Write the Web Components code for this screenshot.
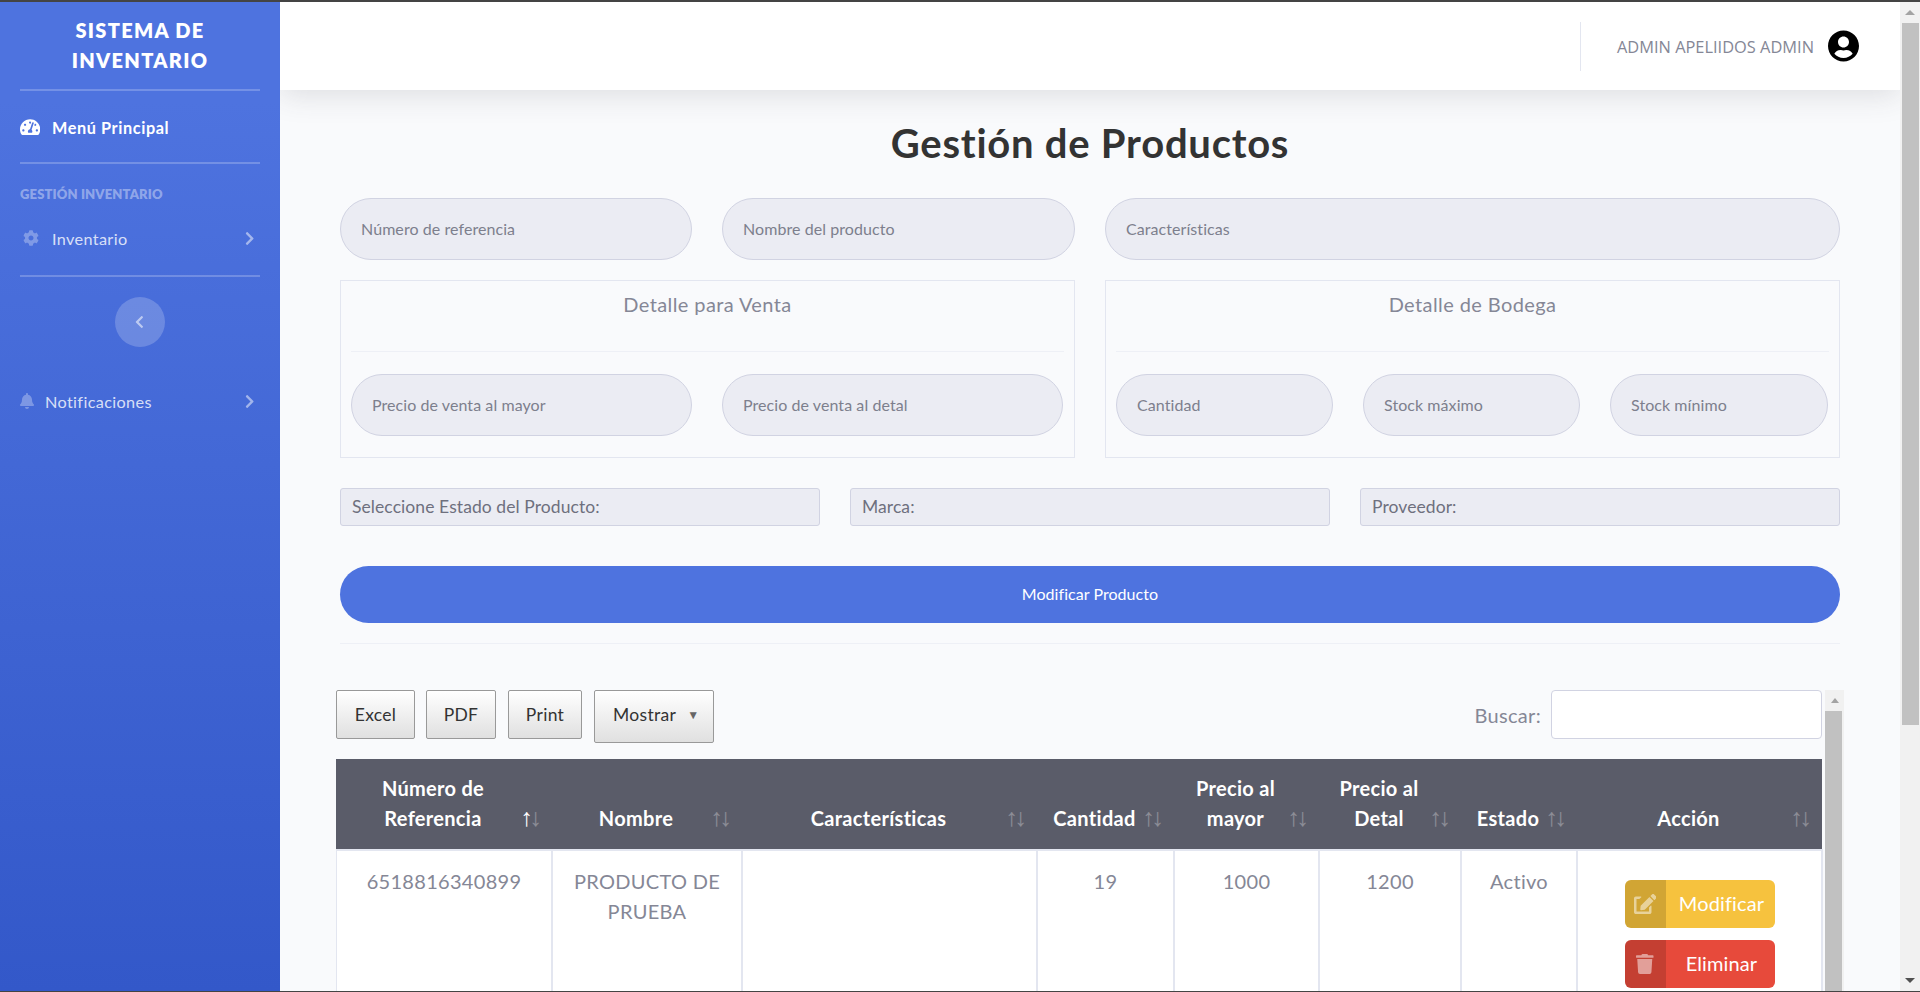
<!DOCTYPE html>
<html lang="es">
<head>
<meta charset="utf-8">
<title>Gestión de Productos</title>
<style>
    html, body {
        margin: 0;
        height: 992px;
        overflow: hidden;
    }

    body {
        box-sizing: border-box;
        display: flex;
        border-top: 2px solid #444;
        border-bottom: 1px solid #444;
        background: #f9fafc;
        font-family: Lato, "Noto Sans", sans-serif;
        font-size: 20px;
        color: #858796;
    }
</style>
</head>
<body>
<app-sidebar></app-sidebar>
<main-panel>
    <top-bar></top-bar>
    <product-form></product-form>
    <product-table></product-table>
</main-panel>
<page-scrollbar></page-scrollbar>

<script>
const ICONS = {
    gauge: ['0 0 576 512', 'M288 32C128.94 32 0 160.94 0 320c0 52.8 14.25 102.26 39.06 144.8 5.61 9.62 16.3 15.2 27.44 15.2h443c11.14 0 21.83-5.58 27.44-15.2C561.75 422.26 576 372.8 576 320c0-159.06-128.94-288-288-288zm0 64c14.71 0 26.58 10.13 30.32 23.65-1.11 2.26-2.64 4.23-3.45 6.67l-9.22 27.67c-5.13 3.49-10.97 6.01-17.64 6.01-17.67 0-32-14.33-32-32S270.33 96 288 96zM96 384c-17.67 0-32-14.33-32-32s14.33-32 32-32 32 14.33 32 32-14.33 32-32 32zm48-160c-17.67 0-32-14.33-32-32s14.33-32 32-32 32 14.33 32 32-14.33 32-32 32zm246.77-72.41l-61.33 184C343.13 347.33 352 364.54 352 384c0 11.72-3.38 22.55-8.88 32H232.88c-5.5-9.45-8.88-20.28-8.88-32 0-33.94 26.5-61.43 59.9-63.59l61.34-184.01c4.17-12.56 17.73-19.45 30.36-15.17 12.57 4.19 19.35 17.79 15.17 30.36zm14.66 57.2l15.52-46.55c3.47-1.29 7.13-2.23 11.05-2.23 17.67 0 32 14.33 32 32s-14.33 32-32 32c-11.38-.01-20.89-6.28-26.57-15.22zM480 384c-17.67 0-32-14.33-32-32s14.33-32 32-32 32 14.33 32 32-14.33 32-32 32z'],
    cog: ['0 0 512 512', 'M487.4 315.7l-42.6-24.6c4.3-23.2 4.3-47 0-70.2l42.6-24.6c4.9-2.8 7.1-8.6 5.5-14-11.1-35.6-30-67.8-54.7-94.6-3.8-4.1-10-5.1-14.8-2.3L380.8 110c-17.9-15.4-38.5-27.3-60.8-35.1V25.8c0-5.6-3.9-10.5-9.4-11.7-36.7-8.2-74.3-7.8-109.2 0-5.5 1.2-9.4 6.1-9.4 11.7V75c-22.2 7.9-42.8 19.8-60.8 35.1L88.7 85.5c-4.9-2.8-11-1.9-14.8 2.3-24.7 26.7-43.6 58.9-54.7 94.6-1.7 5.4.6 11.2 5.5 14L67.3 221c-4.3 23.2-4.3 47 0 70.2l-42.6 24.6c-4.9 2.8-7.1 8.6-5.5 14 11.1 35.6 30 67.8 54.7 94.6 3.8 4.1 10 5.1 14.8 2.3l42.6-24.6c17.9 15.4 38.5 27.3 60.8 35.1v49.2c0 5.6 3.9 10.5 9.4 11.7 36.7 8.2 74.3 7.8 109.2 0 5.5-1.2 9.4-6.1 9.4-11.7v-49.2c22.2-7.9 42.8-19.8 60.8-35.1l42.6 24.6c4.9 2.8 11 1.9 14.8-2.3 24.7-26.7 43.6-58.9 54.7-94.6 1.5-5.5-.7-11.3-5.6-14.1zM256 336c-44.1 0-80-35.9-80-80s35.9-80 80-80 80 35.9 80 80-35.9 80-80 80z'],
    bell: ['0 0 448 512', 'M224 512c35.32 0 63.97-28.65 63.97-64H160.03c0 35.35 28.65 64 63.97 64zm215.39-149.71c-19.32-20.76-55.47-51.99-55.47-154.29 0-77.7-54.48-139.9-127.94-155.16V32c0-17.67-14.32-32-31.98-32s-31.98 14.33-31.98 32v20.84C118.56 68.1 64.08 130.3 64.08 208c0 102.3-36.15 133.53-55.47 154.29-6 6.45-8.66 14.16-8.61 21.71.11 16.4 12.98 32 32.1 32h383.8c19.12 0 32-15.6 32.1-32 .05-7.55-2.61-15.27-8.61-21.71z'],
    right: ['0 0 320 512', 'M285.476 272.971L91.132 467.314c-9.373 9.373-24.569 9.373-33.941 0l-22.667-22.667c-9.357-9.357-9.375-24.522-.04-33.901L188.505 256 34.484 101.255c-9.335-9.379-9.317-24.544.04-33.901l22.667-22.667c9.373-9.373 24.569-9.373 33.941 0L285.475 239.03c9.373 9.372 9.373 24.568.001 33.941z'],
    left: ['0 0 320 512', 'M34.52 239.03L228.87 44.69c9.37-9.37 24.57-9.37 33.94 0l22.67 22.67c9.36 9.36 9.37 24.52.04 33.9L131.49 256l154.02 154.75c9.34 9.38 9.32 24.54-.04 33.9l-22.67 22.67c-9.37 9.37-24.57 9.37-33.94 0L34.52 272.97c-9.37-9.37-9.37-24.57 0-33.94z'],
    user: ['0 0 496 512', 'M248 8C111 8 0 119 0 256s111 248 248 248 248-111 248-248S385 8 248 8zm0 96c48.6 0 88 39.4 88 88s-39.4 88-88 88-88-39.4-88-88 39.4-88 88-88zm0 344c-58.7 0-111.3-26.6-146.5-68.2 18.8-35.4 55.6-59.8 98.5-59.8 2.4 0 4.8.4 7.1 1.1 13 4.2 26.6 6.9 40.9 6.9 14.3 0 28-2.7 40.9-6.9 2.3-.7 4.7-1.1 7.1-1.1 42.9 0 79.7 24.4 98.5 59.8C359.3 421.4 306.7 448 248 448z'],
    edit: ['0 0 576 512', 'M402.6 83.2l90.2 90.2c3.8 3.8 3.8 10 0 13.8L274.4 405.6l-92.8 10.3c-12.4 1.4-22.9-9.1-21.5-21.5l10.3-92.8L388.8 83.2c3.8-3.8 10-3.8 13.8 0zm162-22.9l-48.8-48.8c-15.2-15.2-39.9-15.2-55.2 0l-35.4 35.4c-3.8 3.8-3.8 10 0 13.8l90.2 90.2c3.8 3.8 10 3.8 13.8 0l35.4-35.4c15.2-15.3 15.2-40 0-55.2zM384 346.2V448H64V128h73.2c3.2 0 6.2-1.3 8.5-3.5l40-40c7.6-7.6 2.2-20.5-8.5-20.5H48C21.5 64 0 85.5 0 112v352c0 26.5 21.5 48 48 48h352c26.5 0 48-21.5 48-48V306.2c0-10.7-12.9-16-20.5-8.5l-40 40c-2.2 2.3-3.5 5.3-3.5 8.5z'],
    trash: ['0 0 448 512', 'M432 32H312l-9.4-18.7A24 24 0 0 0 281.1 0H166.8a23.72 23.72 0 0 0-21.4 13.3L136 32H16A16 16 0 0 0 0 48v32a16 16 0 0 0 16 16h416a16 16 0 0 0 16-16V48a16 16 0 0 0-16-16zM53.2 467a48 48 0 0 0 47.9 45h245.8a48 48 0 0 0 47.9-45L416 128H32z']
};

function icon(name, size) {
    const [box, d] = ICONS[name];
    return `<svg viewBox="${box}" height="${size}" fill="currentColor" style="display:block"><path d="${d}"/></svg>`;
}

class SideItem extends HTMLElement {
    constructor() {
        super();
        this.attachShadow({ mode: 'open' });
    }

    connectedCallback() {
        const chevron = this.hasAttribute('chevron') ? `<span class="chev">${icon('right', 15)}</span>` : '';
        this.shadowRoot.innerHTML = `
            <style>
                :host {
                    display: flex;
                    align-items: center;
                    height: 24px;
                    padding: 0 26px 0 20px;
                    color: rgba(255, 255, 255, 0.8);
                    font-size: 16.25px;
                    letter-spacing: 0.35px;
                }

                :host([active]) {
                    color: #fff;
                    font-weight: 700;
                    letter-spacing: 0.6px;
                }

                .ic {
                    width: var(--ic-width, 32px);
                    color: rgba(255, 255, 255, 0.3);
                    display: flex;
                    padding-left: var(--ic-pad, 3px);
                    box-sizing: border-box;
                }

                :host([active]) .ic {
                    color: #fff;
                }

                .chev {
                    margin-left: auto;
                    color: rgba(255, 255, 255, 0.5);
                }
            </style>
            <span class="ic">${icon(this.getAttribute('icon'), this.getAttribute('icon-size') || 16)}</span>
            <slot></slot>
            ${chevron}
        `;
    }
}

class AppSidebar extends HTMLElement {
    constructor() {
        super();
        this.attachShadow({ mode: 'open' });
    }

    connectedCallback() {
        this.shadowRoot.innerHTML = `
            <style>
                :host {
                    display: block;
                    flex: 0 0 280px;
                    background: linear-gradient(180deg, #4e73df 10%, #3358c9 100%);
                    font-weight: 400;
                }

                .brand {
                    height: 87px;
                    padding: 13px 20px 0;
                    box-sizing: border-box;
                    text-align: center;
                    color: #fff;
                    font-size: 20px;
                    font-weight: 800;
                    line-height: 30px;
                    letter-spacing: 1.3px;
                }

                hr {
                    margin: 0 20px;
                    border: 0;
                    border-top: 2px solid rgba(255, 255, 255, 0.22);
                }

                .heading {
                    margin: 22px 20px 0;
                    height: 16px;
                    font-size: 13px;
                    font-weight: 800;
                    line-height: 16px;
                    letter-spacing: 0.15px;
                    color: rgba(255, 255, 255, 0.4);
                }

                .toggle {
                    width: 50px;
                    height: 50px;
                    margin: 20px auto 0;
                    border-radius: 50%;
                    background: rgba(255, 255, 255, 0.2);
                    color: rgba(255, 255, 255, 0.55);
                    display: flex;
                    align-items: center;
                    justify-content: center;
                    padding-right: 2px;
                    box-sizing: border-box;
                }

                .m1 { margin-top: 24px; }
                .m2 { margin-top: 24px; }
                .m3 { margin-top: 23px; }
                .m4 { margin-top: 25px; }
                .m5 { margin-top: 42px; }
            </style>
            <div class="brand">SISTEMA DE INVENTARIO</div>
            <hr>
            <side-item class="m1" active icon="gauge" icon-size="18" style="--ic-pad:0">Menú Principal</side-item>
            <hr class="m3">
            <div class="heading">GESTIÓN INVENTARIO</div>
            <side-item class="m2" icon="cog" chevron>Inventario</side-item>
            <hr class="m4">
            <div class="toggle">${icon('left', 14)}</div>
            <side-item class="m5" icon="bell" chevron style="--ic-width:25px;--ic-pad:0">Notificaciones</side-item>
        `;
    }
}

class MainPanel extends HTMLElement {
    constructor() {
        super();
        this.attachShadow({ mode: 'open' });
    }

    connectedCallback() {
        this.shadowRoot.innerHTML = `
            <style>
                :host {
                    display: block;
                    flex: 1;
                    min-width: 0;
                    overflow: hidden;
                }
            </style>
            <slot></slot>
        `;
    }
}

class TopBar extends HTMLElement {
    constructor() {
        super();
        this.attachShadow({ mode: 'open' });
    }

    connectedCallback() {
        this.shadowRoot.innerHTML = `
            <style>
                :host {
                    display: flex;
                    align-items: center;
                    justify-content: flex-end;
                    height: 88px;
                    padding-right: 41px;
                    background: #fff;
                    box-shadow: 0 5px 30px rgba(58, 59, 69, 0.15);
                    position: relative;
                }

                .sep {
                    width: 1px;
                    height: 49px;
                    background: #e3e6f0;
                    margin-right: 36px;
                }

                .name {
                    font-family: "Open Sans", sans-serif;
                    font-size: 16.4px;
                    color: #858796;
                    margin-right: 14px;
                    white-space: nowrap;
                }

                .avatar {
                    color: #000;
                }
            </style>
            <div class="sep"></div>
            <span class="name">ADMIN APELIIDOS ADMIN</span>
            <span class="avatar">${icon('user', 32)}</span>
        `;
    }
}

class PillField extends HTMLElement {
    constructor() {
        super();
        this.attachShadow({ mode: 'open' });
    }

    connectedCallback() {
        this.shadowRoot.innerHTML = `
            <style>
                :host {
                    display: flex;
                    align-items: center;
                    height: 62px;
                    box-sizing: border-box;
                    padding: 0 20px 2px;
                    background: #ebecf3;
                    border: 1px solid #d1d3e2;
                    border-radius: 31px;
                    font-size: 16px;
                    letter-spacing: 0.07px;
                    color: #7d7f8d;
                    white-space: nowrap;
                }
            </style>
            <slot></slot>
        `;
    }
}

class SelectField extends HTMLElement {
    constructor() {
        super();
        this.attachShadow({ mode: 'open' });
    }

    connectedCallback() {
        this.shadowRoot.innerHTML = `
            <style>
                :host {
                    display: flex;
                    align-items: center;
                    height: 38px;
                    box-sizing: border-box;
                    padding: 0 11px 2px;
                    background: #ebecf3;
                    border: 1px solid #d1d3e2;
                    border-radius: 3px;
                    font-size: 17.5px;
                    letter-spacing: 0.08px;
                    color: #6e707e;
                    white-space: nowrap;
                }
            </style>
            <slot></slot>
        `;
    }
}

class DetailBox extends HTMLElement {
    constructor() {
        super();
        this.attachShadow({ mode: 'open' });
    }

    connectedCallback() {
        this.shadowRoot.innerHTML = `
            <style>
                :host {
                    display: block;
                    height: 178px;
                    box-sizing: border-box;
                    padding: 0 10px;
                    border: 1px solid #e3e6f0;
                }

                .title {
                    height: 71px;
                    padding-top: 8px;
                    box-sizing: border-box;
                    text-align: center;
                    font-size: 20px;
                    line-height: 30px;
                    letter-spacing: 0.4px;
                    border-bottom: 1px solid #eef0f6;
                }

                .fields {
                    display: grid;
                    grid-template-columns: var(--cols);
                    column-gap: var(--gap);
                    margin-top: 22px;
                }
            </style>
            <div class="title">${this.getAttribute('heading')}</div>
            <div class="fields"><slot></slot></div>
        `;
    }
}

class ProductForm extends HTMLElement {
    constructor() {
        super();
        this.attachShadow({ mode: 'open' });
    }

    connectedCallback() {
        this.shadowRoot.innerHTML = `
            <style>
                :host {
                    display: block;
                    padding: 0 60px;
                }

                h1 {
                    margin: 0;
                    height: 108px;
                    box-sizing: border-box;
                    padding-top: 29px;
                    text-align: center;
                    color: #333;
                    font-size: 40px;
                    font-weight: 700;
                    line-height: 48px;
                    letter-spacing: 0.75px;
                }

                .top {
                    display: grid;
                    grid-template-columns: 735px 735px;
                    column-gap: 30px;
                }

                .pair {
                    display: grid;
                    grid-template-columns: 1fr 353px;
                    column-gap: 30px;
                }

                .boxes {
                    margin-top: 20px;
                }

                .selects {
                    display: grid;
                    grid-template-columns: repeat(3, 1fr);
                    column-gap: 30px;
                    margin-top: 30px;
                }

                .submit {
                    display: flex;
                    align-items: center;
                    justify-content: center;
                    height: 57px;
                    margin-top: 40px;
                    padding-bottom: 2px;
                    box-sizing: border-box;
                    background: #4e73df;
                    border-radius: 29px;
                    color: #fff;
                    font-size: 16px;
                    letter-spacing: 0.05px;
                }

                hr {
                    margin: 20px 0 0;
                    border: 0;
                    border-top: 1px solid #eef0f6;
                }
            </style>
            <h1>Gestión de Productos</h1>
            <div class="top">
                <div class="pair">
                    <pill-field>Número de referencia</pill-field>
                    <pill-field>Nombre del producto</pill-field>
                </div>
                <pill-field>Características</pill-field>
            </div>
            <div class="top boxes">
                <detail-box heading="Detalle para Venta" style="--cols:341px 341px;--gap:30px">
                    <pill-field>Precio de venta al mayor</pill-field>
                    <pill-field>Precio de venta al detal</pill-field>
                </detail-box>
                <detail-box heading="Detalle de Bodega" style="--cols:217px 217px 218px;--gap:30px">
                    <pill-field>Cantidad</pill-field>
                    <pill-field>Stock máximo</pill-field>
                    <pill-field>Stock mínimo</pill-field>
                </detail-box>
            </div>
            <div class="selects">
                <select-field>Seleccione Estado del Producto:</select-field>
                <select-field>Marca:</select-field>
                <select-field>Proveedor:</select-field>
            </div>
            <div class="submit">Modificar Producto</div>
            <hr>
        `;
    }
}

class ExportButton extends HTMLElement {
    constructor() {
        super();
        this.attachShadow({ mode: 'open' });
    }

    connectedCallback() {
        this.shadowRoot.innerHTML = `
            <style>
                :host {
                    display: flex;
                    align-items: center;
                    justify-content: center;
                    height: 49px;
                    box-sizing: border-box;
                    border: 1px solid #999;
                    border-radius: 2px;
                    background: linear-gradient(180deg, #fff 0%, #e0e0e0 100%);
                    color: #333;
                    font-size: 17.5px;
                    letter-spacing: 0.3px;
                    white-space: nowrap;
                }

                :host([dropdown]) {
                    padding: 0 0 4px 4px;
                    justify-content: flex-start;
                    padding-left: 18px;
                }

                .arrow {
                    margin-left: 11px;
                    font-size: 12px;
                    color: #666;
                }
            </style>
            <slot></slot>
            ${this.hasAttribute('dropdown') ? '<span class="arrow">▼</span>' : ''}
        `;
    }
}

class ActionButton extends HTMLElement {
    constructor() {
        super();
        this.attachShadow({ mode: 'open' });
    }

    connectedCallback() {
        this.shadowRoot.innerHTML = `
            <style>
                :host {
                    display: flex;
                    width: 150px;
                    height: 48px;
                    border-radius: 6px;
                    overflow: hidden;
                    color: #fff;
                    font-size: 20px;
                    letter-spacing: 0.12px;
                }

                .ic {
                    flex: 0 0 41px;
                    display: flex;
                    align-items: center;
                    justify-content: center;
                    background: rgba(0, 0, 0, 0.15);
                    color: rgba(255, 255, 255, 0.5);
                }

                .label {
                    flex: 1;
                    display: flex;
                    align-items: center;
                    justify-content: center;
                    padding: 0 0 3px 3px;
                }
            </style>
            <span class="ic">${icon(this.getAttribute('icon'), 20)}</span>
            <span class="label"><slot></slot></span>
        `;
    }
}

class ProductTable extends HTMLElement {
    constructor() {
        super();
        this.attachShadow({ mode: 'open' });
    }

    connectedCallback() {
        const heads = [
            ['Número de Referencia', 216, true],
            ['Nombre', 190],
            ['Características', 295],
            ['Cantidad', 137],
            ['Precio al mayor', 145],
            ['Precio al Detal', 142],
            ['Estado', 116],
            ['Acción', 245]
        ];
        const cols = heads.map(h => `<col style="width:${h[1]}px">`).join('');
        const ths = heads.map(h => `
            <th>${h[0]}<span class="sort"><i class="${h[2] ? 'on' : ''}">↑</i><i>↓</i></span></th>`).join('');

        this.shadowRoot.innerHTML = `
            <style>
                :host {
                    display: block;
                    position: relative;
                    height: 347px;
                    margin: 46px 56px 0 56px;
                    overflow: hidden;
                    font-size: 20px;
                    letter-spacing: 0.3px;
                }

                .tools {
                    display: flex;
                    height: 69px;
                    width: 1486px;
                }

                export-button + export-button {
                    margin-left: 12px;
                }

                export-button:nth-child(2) {
                    margin-left: 11px;
                }

                .search {
                    margin-left: auto;
                    display: flex;
                    height: 49px;
                    align-items: center;
                }

                .search label {
                    margin-right: 10px;
                }

                .search span {
                    display: block;
                    width: 271px;
                    height: 49px;
                    box-sizing: border-box;
                    background: #fff;
                    border: 1px solid #d1d3e2;
                    border-radius: 4px;
                }

                table {
                    width: 1486px;
                    margin-left: -1px;
                    table-layout: fixed;
                    border-collapse: collapse;
                }

                thead {
                    background: #5a5c69;
                    color: #fff;
                }

                th {
                    position: relative;
                    height: 91px;
                    padding: 12px 34px 16px 12px;
                    box-sizing: border-box;
                    vertical-align: bottom;
                    font-weight: 700;
                    line-height: 30px;
                }

                .sort {
                    position: absolute;
                    right: 10px;
                    bottom: 17px;
                    font-family: "Liberation Sans", sans-serif;
                    font-size: 25px;
                    font-weight: 400;
                    letter-spacing: 0;
                    white-space: nowrap;
                }

                .sort i {
                    display: inline-block;
                    width: 9px;
                    text-indent: -4px;
                    font-style: normal;
                    opacity: 0.3;
                }

                .sort i.on {
                    opacity: 1;
                }

                td {
                    padding: 15px 12px 0;
                    vertical-align: top;
                    text-align: center;
                    line-height: 30px;
                    background: #fff;
                    border: 2px solid #e3e6f0;
                    height: 200px;
                    box-sizing: border-box;
                }

                .actions {
                    display: flex;
                    flex-direction: column;
                    align-items: center;
                    gap: 12px;
                    margin-top: 14px;
                }

                .bar {
                    position: absolute;
                    top: 0;
                    right: 0;
                    bottom: 0;
                    width: 19px;
                    background: #f1f1f1;
                    display: flex;
                    flex-direction: column;
                    align-items: center;
                }

                .bar b {
                    flex: 0 0 21px;
                    display: flex;
                    align-items: center;
                    justify-content: center;
                    width: 100%;
                }

                .bar b::before {
                    content: "";
                    border: 4px solid transparent;
                    border-top: 0;
                    border-bottom: 5px solid #a3a3a3;
                }

                .bar em {
                    flex: 1;
                    width: 17px;
                    margin-right: 2px;
                    background: #c1c1c1;
                }
            </style>
            <div class="tools">
                <export-button style="width:79px">Excel</export-button>
                <export-button style="width:70px">PDF</export-button>
                <export-button style="width:74px">Print</export-button>
                <export-button dropdown style="width:120px;height:53px">Mostrar</export-button>
                <div class="search">
                    <label>Buscar:</label>
                    <span></span>
                </div>
            </div>
            <table>
                <colgroup>${cols}</colgroup>
                <thead><tr>${ths}</tr></thead>
                <tbody>
                    <tr>
                        <td>6518816340899</td>
                        <td>PRODUCTO DE PRUEBA</td>
                        <td></td>
                        <td>19</td>
                        <td>1000</td>
                        <td>1200</td>
                        <td>Activo</td>
                        <td>
                            <div class="actions">
                                <action-button icon="edit" style="background:#f6c23e">Modificar</action-button>
                                <action-button icon="trash" style="background:#e74a3b">Eliminar</action-button>
                            </div>
                        </td>
                    </tr>
                </tbody>
            </table>
            <div class="bar"><b></b><em></em></div>
        `;
    }
}

class PageScrollbar extends HTMLElement {
    constructor() {
        super();
        this.attachShadow({ mode: 'open' });
    }

    connectedCallback() {
        this.shadowRoot.innerHTML = `
            <style>
                :host {
                    display: flex;
                    flex-direction: column;
                    align-items: center;
                    flex: 0 0 20px;
                    background: #f1f1f1;
                }

                b {
                    flex: 0 0 21px;
                    display: flex;
                    align-items: center;
                    justify-content: center;
                }

                b::before {
                    content: "";
                    border: 5px solid transparent;
                    border-top: 0;
                    border-bottom: 5px solid #a3a3a3;
                }

                b.down::before {
                    border: 5px solid transparent;
                    border-bottom: 0;
                    border-top: 5px solid #505050;
                }

                em {
                    flex: 0 0 702px;
                    width: 17px;
                    background: #c1c1c1;
                }

                i {
                    flex: 1;
                }
            </style>
            <b></b><em></em><i></i><b class="down"></b>
        `;
    }
}

customElements.define('side-item', SideItem);
customElements.define('app-sidebar', AppSidebar);
customElements.define('main-panel', MainPanel);
customElements.define('top-bar', TopBar);
customElements.define('pill-field', PillField);
customElements.define('select-field', SelectField);
customElements.define('detail-box', DetailBox);
customElements.define('product-form', ProductForm);
customElements.define('export-button', ExportButton);
customElements.define('action-button', ActionButton);
customElements.define('product-table', ProductTable);
customElements.define('page-scrollbar', PageScrollbar);
</script>
</body>
</html>
